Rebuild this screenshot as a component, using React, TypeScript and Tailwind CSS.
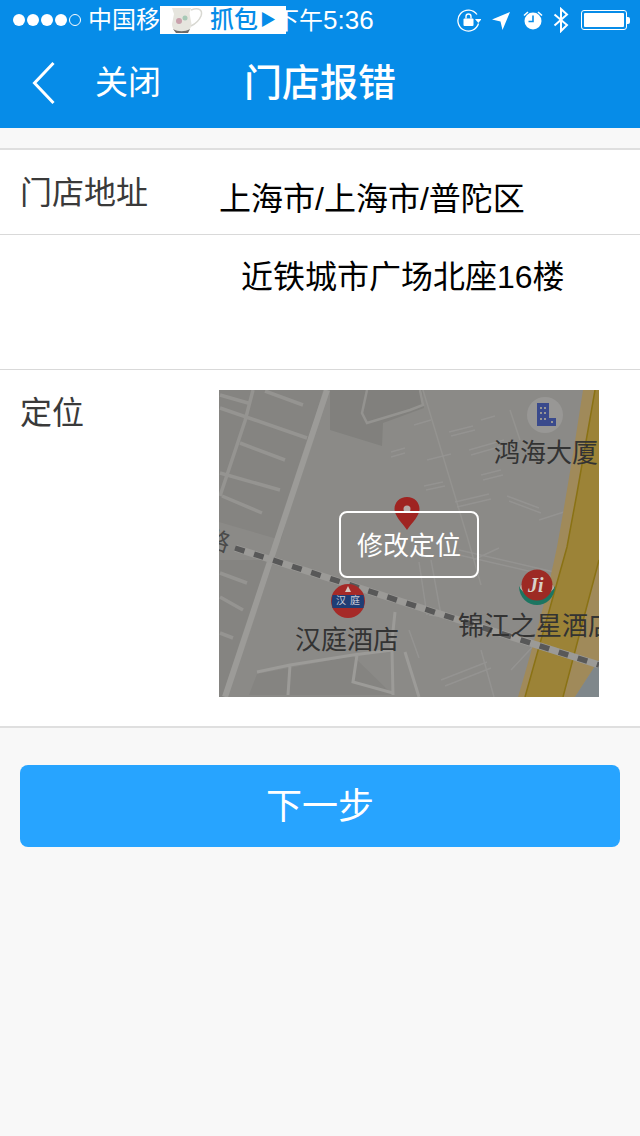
const FONT = "font-['Liberation_Sans','Noto_Sans_CJK_SC',sans-serif]";

function StatusIcons() {
  return (
    <div className="flex items-center">
      <svg width="24" height="24" viewBox="0 0 24 24" className="mr-[10px]" fill="none">
        <path d="M20 6.500A10.500 10.500 0 1 0 21.500 15.500" stroke="#fff" strokeWidth="1.300" />
        <path d="M18 11h6.500l-3.200 4z" fill="#fff" />
        <rect x="6.500" y="10.500" width="10" height="7.500" rx="1" fill="#fff" />
        <path d="M9 10.500V8.500a2.500 2.500 0 0 1 5 0v2" stroke="#fff" strokeWidth="1.400" />
      </svg>
      <svg width="20" height="20" viewBox="0 0 20 20" className="mr-[11px]">
        <path d="M1 9.500 19 2l-7.500 18-2-8.500z" fill="#fff" />
      </svg>
      <svg width="22" height="22" viewBox="0 0 22 22" className="mr-[9px]" fill="none">
        <circle cx="11" cy="12" r="8.500" fill="#fff" />
        <path d="M11 6.500V12.500H6.500" stroke="#068ce8" strokeWidth="1.600" />
        <path d="M2 6.500 6 3M20 6.500 16 3" stroke="#fff" strokeWidth="1.600" />
      </svg>
      <svg width="16" height="26" viewBox="0 0 16 26" className="mr-[12px]" fill="none">
        <path d="M1.500 7.500 14 18 8 24V2l6 5.500L1.500 18.500" stroke="#fff" strokeWidth="2" />
      </svg>
      <div className="flex items-center">
        <div className="w-[46px] h-[20px] rounded-[3px] border border-white p-[2px]">
          <div className="w-full h-full rounded-[1px] bg-white" />
        </div>
        <div className="w-[3px] h-[7px] rounded-r-[2px] bg-white" />
      </div>
    </div>
  );
}

function Teapot() {
  return (
    <svg width="34" height="28" viewBox="0 0 34 28" fill="none">
      <path d="M2 2h19l-1.500 5 2 11c0 5-4 9-10 9S2 23 2 18l2-10z" fill="#e6e5de" />
      <path d="M21 4c8-3 12 0 10 6-2 5-6 8-10 10" stroke="#d8d8d2" strokeWidth="1.500" />
      <circle cx="9" cy="15" r="3" fill="#c9a1ac" />
      <circle cx="15" cy="12" r="2.500" fill="#a7c9b6" />
      <path d="M3 23c5 3 12 3 17 0l-2 4H6z" fill="#6d6a68" />
    </svg>
  );
}

function MapDrawing() {
  return (
    <svg width="380" height="307" viewBox="0 0 380 307" className="block" fill="none">
      <rect width="380" height="307" fill="#8b8a87" />
      {/* block shading */}
      <path d="M0 0H104L62 150 0 132z" fill="#858481" />
      <path d="M111 0V40L163 56 164 33 205 18 203 0z" fill="#81807d" />
      <path d="M0 170H55L8 307H0zM38 284 134 266 174 305H30z" fill="#858481" />

      {/* side streets on the left */}
      <g stroke="#959491" strokeWidth="3.500">
        <path d="M1 18 88 48M34 0 26 31 1 106M21 53 66 70M1 83 61 100M3 106 43 123M46 1 84 15M1 5 29 13" />
        <path d="M1 183 28 193M1 207 24 220M1 243 14 248" />
      </g>
      {/* main road */}
      <path d="M108 0 6 307" stroke="#9c9b98" strokeWidth="6" />

      {/* top block road */}
      <path d="M148 0 143 23 148 33 191 20 204 15 201 0" stroke="#949390" strokeWidth="2.500" />

      {/* right block streets */}
      <g stroke="#949390" strokeWidth="1.500">
        <path d="M204 0 248 146M291 20 301 50M248 146 262 195" />
      </g>
      <g stroke="#979694" strokeWidth="1.500" opacity="0.8">
        <path d="M172 62 186 58M172 67 186 63M195 35 212 30M230 42 254 36M232 46 256 40M262 30 276 26M208 70 232 64M250 60 285 50M252 65 287 55" />
        <path d="M262 85 282 80M264 90 284 85M205 96 224 92M207 100 226 96M236 112 270 104M238 117 272 109M288 106 320 118M290 111 322 123M320 130 345 122" />
        <path d="M240 160 335 182M240 165 335 187M200 172 208 225M212 170 222 225M210 225 250 230M254 170 280 158" />
        <path d="M222 290 268 272M226 296 272 278M262 260 275 307M190 240 200 268M292 280 320 250" />
      </g>
      {/* lower roads */}
      <g stroke="#9c9b98" strokeWidth="3">
        <path d="M38 282 71 275 134 265 173 260M71 275 69 305M138 265 134 292 174 303M173 260 174 305M176 222 172 260M186 262 200 307" />
      </g>

      {/* highway */}
      <path d="M364 0H380V270L356 307H299Q325 220 338 157 352 80 364 0z" fill="#a08a5a" />
      <path d="M376 0H380V170L344 307H306L348 157 358 103z" fill="#9c8337" />
      <path d="M376 0 358 103 348 157 306 307M380 170 344 307" stroke="#8a7214" strokeWidth="1.500" />
      <path d="M380 270V307H356z" fill="#7f878b" />

      {/* rail */}
      <path d="M16 158 380 275" stroke="#9b9a97" strokeWidth="7" />
      <path d="M16 158 380 275" stroke="#585858" strokeWidth="5.500" strokeDasharray="10 10" />

      {/* pin */}
      <path d="M188 107c-7.500 0-12.500 5.500-12.500 12 0 7 7 13 12.500 21 5.500-8 12.500-14 12.500-21 0-6.500-5-12-12.500-12z" fill="#9f2421" />
      <circle cx="188" cy="119" r="3.500" fill="#b5aba8" />

      {/* building marker */}
      <circle cx="326" cy="25" r="18" fill="#989795" />
      <path d="M318 13h12v15h7v8h-19z" fill="#3a4a8c" />
      <path d="M321 17h2v2h-2zM325 17h2v2h-2zM321 22h2v2h-2zM325 22h2v2h-2zM321 28h2v2h-2zM325 28h2v2h-2zM332 31h2v2h-2z" fill="#989795" />

      {/* hanting marker */}
      <circle cx="129" cy="211" r="17" fill="#a52a28" />
      <path d="M113.500 205h31q1.500 6.500 0 13h-31q-1.500-6.500 0-13z" fill="#1f3d75" />
      <path d="M129 196l3 6h-6z" fill="#d8c8c0" />

      {/* jinjiang marker */}
      <path d="M300 196c0 12 9 19 18 19s18-7 18-19c-4 8-11 11-18 11s-14-3-18-11z" fill="#1c7561" />
      <path d="M301 198c4 6 10 9 17 9s13-3 17-9l-1-3h-32z" fill="#b9b3a8" />
      <circle cx="318" cy="195" r="15.500" fill="#9d2a24" />
    </svg>
  );
}

function MapPanel() {
  return (
    <div className="relative w-[380px] h-[307px] overflow-hidden">
      <MapDrawing />
      <span className="absolute left-[275px] top-[45px] text-[26px] leading-[36px] whitespace-nowrap text-[#333]">鸿海大厦</span>
      <span className="absolute left-[76px] top-[232px] text-[26px] leading-[36px] whitespace-nowrap text-[#333]">汉庭酒店</span>
      <span className="absolute left-[239px] top-[218px] text-[26px] leading-[36px] whitespace-nowrap text-[#333]">锦江之星酒店</span>
      <span className="absolute left-[-13px] top-[134px] rotate-[18deg] text-[24px] leading-[34px] text-[#4a4a4a]">路</span>
      <span className="absolute left-[117px] top-[204px] text-[10px] leading-[14px] tracking-[4px] whitespace-nowrap text-[#c8ccd8]">汉庭</span>
      <span className="absolute left-[309px] top-[182px] text-[20px] leading-[26px] font-bold italic text-[#d8d0c8] font-['Liberation_Serif',serif]">Ji</span>
      <button className="absolute left-[120px] top-[121px] w-[140px] h-[67px] rounded-[8px] border-2 border-white pt-[3px] text-[26px] text-white">
        修改定位
      </button>
    </div>
  );
}

export default function App() {
  return (
    <div className={`${FONT} relative w-[640px] min-h-[1136px] bg-[#f8f8f8]`}>
      <div className="relative bg-[#068ce8] h-[128px] text-white">
        <div className="flex items-center justify-between h-[40px] pl-[13px] pr-[10px]">
          <div className="flex items-center">
            <div className="flex items-center gap-[2px]">
              <span className="w-[12px] h-[12px] rounded-full bg-white" />
              <span className="w-[12px] h-[12px] rounded-full bg-white" />
              <span className="w-[12px] h-[12px] rounded-full bg-white" />
              <span className="w-[12px] h-[12px] rounded-full bg-white" />
              <span className="w-[12px] h-[12px] rounded-full border border-white" />
            </div>
            <span className="ml-[7px] w-[187px] text-[24px] leading-[30px] whitespace-nowrap">中国移动</span>
            <span className="text-[24px] leading-[30px] whitespace-nowrap">
              下午<span className="text-[26px]">5:36</span>
            </span>
          </div>
          <StatusIcons />
        </div>
        <div className="flex items-center h-[86px] pl-[32px]">
          <svg width="24" height="44" viewBox="0 0 24 44" fill="none">
            <path d="M21.500 2 2.500 22l19 20" stroke="#fff" strokeWidth="3" />
          </svg>
          <span className="ml-[39px] text-[33px] leading-[44px]">关闭</span>
          <span className="ml-[83px] text-[38px] leading-[44px] font-medium">门店报错</span>
        </div>
        {/* capture tool banner over the status bar */}
        <div className="absolute left-[160px] top-[6px] w-[126px] h-[28px] bg-white flex items-center text-[#068ce8]">
          <div className="ml-[10px] w-[38px]">
            <Teapot />
          </div>
          <span className="ml-[2px] text-[24px] leading-[28px] font-medium whitespace-nowrap">抓包</span>
          <span className="ml-[2px] text-[16px] leading-[28px] whitespace-nowrap">▶</span>
        </div>
      </div>

      <div className="mt-[20px] bg-white border-y-2 border-[#dfdfdf] text-[#3a3a3a]">
        <div className="flex h-[85px] border-b border-[#d9d9d9]">
          <div className="w-[219px] pl-[20px] pt-[21px] text-[32px] leading-[44px]">门店地址</div>
          <div className="pt-[27px] text-[32px] leading-[44px] text-black whitespace-nowrap">上海市/上海市/普陀区</div>
        </div>
        <div className="flex h-[135px] border-b border-[#d9d9d9]">
          <div className="w-[219px]" />
          <div className="pl-[22px] pt-[20px] text-[32px] leading-[44px] text-black whitespace-nowrap">近铁城市广场北座16楼</div>
        </div>
        <div className="flex h-[356px]">
          <div className="w-[219px] pl-[20px] pt-[21px] text-[32px] leading-[44px]">定位</div>
          <div className="pt-[20px]">
            <MapPanel />
          </div>
        </div>
      </div>

      <div className="px-[20px] pt-[37px]">
        <button className="w-full h-[82px] rounded-[8px] bg-[#27a4ff] pt-[2px] text-[36px] text-white">下一步</button>
      </div>
    </div>
  );
}
